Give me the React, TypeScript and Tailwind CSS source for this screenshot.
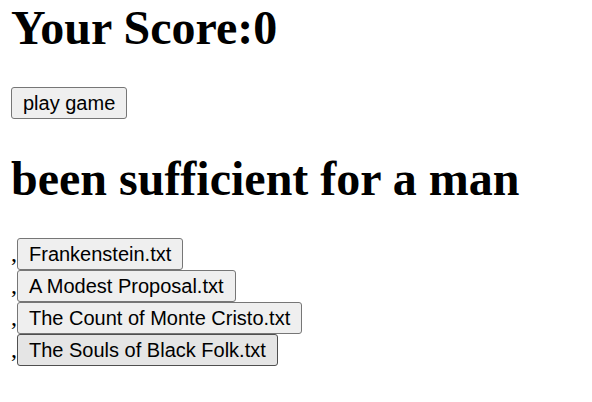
import React from "react";

const books = [
  "Frankenstein.txt",
  "A Modest Proposal.txt",
  "The Count of Monte Cristo.txt",
  "The Souls of Black Folk.txt",
];

const btn =
  "font-['Liberation_Sans',Arial,sans-serif] text-[20px] leading-[23px] px-[11px] pt-[4px] pb-[3px] border border-[#767676] rounded-[3px] bg-[#efefef] text-black";

export default function App() {
  return (
    <div className="bg-white min-h-[402px] px-[11px] pt-0 font-['Liberation_Serif','Times_New_Roman',serif] text-[24px] leading-[normal] text-black">
      <h1 className="text-[48px] font-bold leading-[normal] mt-0 mb-[32.16px]">Your Score:0</h1>
      <div>
        <button className={btn}>play game</button>
      </div>
      <h1 className="text-[48px] font-bold leading-[normal] my-[32.16px]">been sufficient for a man</h1>
      <div>
        {books.map((b, i) => (
          <div key={b}>
            ,
            <button
              className={
                i === books.length - 1
                  ? "font-['Liberation_Sans',Arial,sans-serif] text-[20px] leading-[23px] px-[11px] pt-[4px] pb-[3px] border border-[#4f4f4f] rounded-[3px] bg-[#e5e5e5] text-black"
                  : btn
              }
            >
              {b}
            </button>
          </div>
        ))}
      </div>
    </div>
  );
}
